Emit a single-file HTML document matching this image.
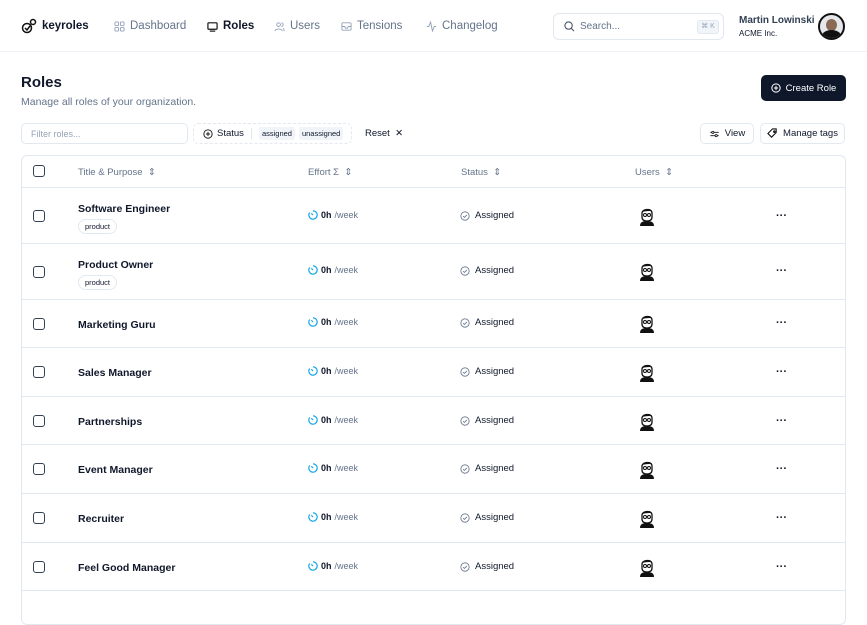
<!DOCTYPE html>
<html><head><meta charset="utf-8"><style>
*{box-sizing:border-box;margin:0;padding:0}
body{width:867px;height:600px;overflow:hidden;background:#fff;font-family:"Liberation Sans",sans-serif;color:#0f172a;font-size:10px;position:relative}
.abs{position:absolute}
.nav{position:absolute;top:0;left:0;width:867px;height:52px;border-bottom:1px solid #eef1f5}
.ni{position:absolute;top:20px;font-size:11.5px;color:#64748b;display:flex;align-items:center;gap:5px}
.ni svg{width:11px;height:11px}
.btn{position:absolute;border:1px solid #e2e8f0;border-radius:5px;display:flex;align-items:center;justify-content:center;gap:5px;font-size:9.5px;color:#0f172a}
.table{position:absolute;left:21px;top:155px;width:825px;height:470px;border:1px solid #e2e8f0;border-radius:6px;overflow:hidden}
.row{position:absolute;left:0;width:825px;border-bottom:1px solid #e2e8f0}
.cb{position:absolute;left:11px;width:12px;height:12px;border:1.3px solid #334155;border-radius:3px}
.th{position:absolute;top:11px;font-size:9.5px;color:#64748b}
.title{position:absolute;left:56px;font-weight:bold;font-size:10.5px}
.tag{position:absolute;left:56px;font-size:7.5px;border:1px solid #e2e8f0;border-radius:8px;padding:2px 6px;color:#0f172a}
.eff{font-size:9px;display:flex;align-items:center;gap:3px}
.eff b{font-weight:bold}.eff span{color:#64748b}
.st{font-size:9.5px;display:flex;align-items:center;gap:5px}
</style></head><body>
<div class="nav">
<div class="abs" style="left:21px;top:18px;display:flex;align-items:center;gap:5px;font-weight:bold;font-size:11.5px">
<svg width="16" height="16" viewBox="0 0 16 16" fill="none" stroke="#111" stroke-width="1.5"><circle cx="6" cy="10" r="4.5"/><circle cx="12" cy="4" r="2.5"/><path d="M4 10l2 2 3-4"/></svg>keyroles</div>
<div class="ni" style="left:114px"><svg viewBox="0 0 12 12" fill="none" stroke="#94a3b8"><rect x="1" y="1" width="4" height="4" rx="1"/><rect x="7" y="1" width="4" height="4" rx="1"/><rect x="1" y="7" width="4" height="4" rx="1"/><rect x="7" y="7" width="4" height="4" rx="1"/></svg>Dashboard</div>
<div class="ni" style="left:207px;color:#0f172a;font-weight:bold"><svg viewBox="0 0 12 12" fill="none" stroke="#111" stroke-width="1.3"><rect x="1" y="2" width="10" height="7" rx="1"/><path d="M3 11h6"/></svg>Roles</div>
<div class="ni" style="left:274px"><svg viewBox="0 0 12 12" fill="none" stroke="#94a3b8"><circle cx="5" cy="4" r="2"/><path d="M1 11c0-3 8-3 8 0M8 2a2 2 0 010 4M10 8c1 1 1 2 1 3"/></svg>Users</div>
<div class="ni" style="left:341px"><svg viewBox="0 0 12 12" fill="none" stroke="#94a3b8"><rect x="1" y="2" width="10" height="8" rx="1"/><path d="M1 6h3l1 2h2l1-2h3"/></svg>Tensions</div>
<div class="ni" style="left:426px"><svg viewBox="0 0 12 12" fill="none" stroke="#94a3b8"><path d="M1 6h2l2-5 2 10 2-5h2"/></svg>Changelog</div>
<div class="abs" style="left:553px;top:13px;width:171px;height:27px;border:1px solid #e2e8f0;border-radius:6px">
<svg class="abs" style="left:10px;top:7px" width="11" height="11" viewBox="0 0 12 12" fill="none" stroke="#475569" stroke-width="1.2"><circle cx="5" cy="5" r="4"/><path d="M8 8l3 3"/></svg>
<span class="abs" style="left:26px;top:7px;font-size:10px;color:#64748b">Search...</span>
<span class="abs" style="left:143px;top:6px;width:22px;height:14px;background:#f1f5f9;border:1px solid #e2e8f0;border-radius:3px;font-size:7px;color:#94a3b8;text-align:center;line-height:12px">⌘ K</span></div>
<div class="abs" style="left:739px;top:15px;font-size:10px;color:#334155;font-weight:bold">Martin Lowinski</div>
<div class="abs" style="left:739px;top:29px;font-size:8px;color:#0f172a">ACME Inc.</div>
<div class="abs" style="left:818px;top:13px;width:27px;height:27px;border-radius:50%;background:#e5e7eb;border:2px solid #111;overflow:hidden"><div class="abs" style="left:6px;top:4px;width:11px;height:12px;border-radius:50%;background:#8a6a55"></div><div class="abs" style="left:2px;top:15px;width:19px;height:12px;border-radius:50% 50% 0 0;background:#111"></div></div>
</div>
<div class="abs" style="left:21px;top:74px;font-size:15px;font-weight:bold">Roles</div>
<div class="abs" style="left:21px;top:96px;font-size:10.5px;color:#64748b">Manage all roles of your organization.</div>
<div class="abs" style="left:761px;top:75px;width:85px;height:26px;background:#0f172a;border-radius:5px;color:#fff;font-size:9.5px;display:flex;align-items:center;justify-content:center;gap:5px"><svg width="10" height="10" viewBox="0 0 12 12" fill="none" stroke="#fff" stroke-width="1.2"><circle cx="6" cy="6" r="5"/><path d="M6 3.5v5M3.5 6h5"/></svg>Create Role</div>
<div class="btn" style="left:21px;top:123px;width:167px;height:21px;justify-content:flex-start;padding-left:9px;color:#94a3b8;font-size:9px">Filter roles...</div>
<div class="btn" style="left:193px;top:123px;width:159px;height:21px;border-style:dashed;justify-content:flex-start;padding-left:9px;gap:4px"><svg width="10" height="10" viewBox="0 0 12 12" fill="none" stroke="#111" stroke-width="1.1"><circle cx="6" cy="6" r="5"/><path d="M6 3.5v5M3.5 6h5"/></svg>Status<span style="width:1px;height:11px;background:#e2e8f0;margin:0 3px"></span><span style="background:#f1f5f9;font-size:7.5px;padding:2px 3px;border-radius:2px">assigned</span><span style="background:#f1f5f9;font-size:7.5px;padding:2px 3px;border-radius:2px">unassigned</span></div>
<div class="abs" style="left:365px;top:128px;font-size:9.5px">Reset &nbsp;✕</div>
<div class="btn" style="left:700px;top:123px;width:54px;height:21px"><svg width="11" height="10" viewBox="0 0 12 12" fill="none" stroke="#111"><path d="M1 4h10M1 8h10"/><circle cx="4" cy="4" r="1.3" fill="#fff"/><circle cx="8" cy="8" r="1.3" fill="#fff"/></svg>View</div>
<div class="btn" style="left:760px;top:123px;width:85px;height:21px"><svg width="11" height="11" viewBox="0 0 12 12" fill="none" stroke="#111" stroke-width="1.2"><path d="M1 6l5-5h4v4l-5 5z"/><circle cx="8" cy="4" r="0.8"/></svg>Manage tags</div>
<div class="table">
<div class="row" style="top:0;height:32px"><div class="cb" style="top:9px"></div>
<div class="th" style="left:56px">Title &amp; Purpose &nbsp;⇕</div><div class="th" style="left:286px">Effort Σ &nbsp;⇕</div><div class="th" style="left:439px">Status &nbsp;⇕</div><div class="th" style="left:613px">Users &nbsp;⇕</div></div>
<div class="row" style="top:32px;height:56px"><div class="cb" style="top:22px"></div><div class="title" style="top:15px">Software Engineer</div><div class="tag" style="top:31px">product</div></div>
<div class="row" style="top:88px;height:56px"><div class="cb" style="top:22px"></div><div class="title" style="top:15px">Product Owner</div><div class="tag" style="top:31px">product</div></div>
<div class="row" style="top:144px;height:48px"><div class="cb" style="top:18px"></div><div class="title" style="top:19px">Marketing Guru</div></div>
<div class="row" style="top:192px;height:49px"><div class="cb" style="top:18px"></div><div class="title" style="top:19px">Sales Manager</div></div>
<div class="row" style="top:241px;height:48px"><div class="cb" style="top:18px"></div><div class="title" style="top:19px">Partnerships</div></div>
<div class="row" style="top:289px;height:49px"><div class="cb" style="top:18px"></div><div class="title" style="top:19px">Event Manager</div></div>
<div class="row" style="top:338px;height:49px"><div class="cb" style="top:18px"></div><div class="title" style="top:19px">Recruiter</div></div>
<div class="row" style="top:387px;height:48px"><div class="cb" style="top:18px"></div><div class="title" style="top:19px">Feel Good Manager</div></div>
</div>
<div id="cells"></div>
<script>
var ys=[216,271,323,372,421,469,518,567],h='';
ys.forEach(function(y){
h+='<div class="eff" style="left:308px;top:'+(y-6)+'px;position:absolute"><svg width="10" height="10" viewBox="0 0 12 12" fill="none" stroke="#0ea5e9" stroke-width="1.4"><path d="M6 1a5 5 0 1 1-4 2"/><path d="M4 4l2 2"/></svg><b>0h</b><span>/week</span></div>';
h+='<div class="st" style="left:460px;top:'+(y-6)+'px;position:absolute"><svg width="10" height="10" viewBox="0 0 12 12" fill="none" stroke="#64748b"><circle cx="6" cy="6" r="5"/><path d="M3.8 6.2l1.5 1.5 3-3"/></svg>Assigned</div>';
h+='<svg style="position:absolute;left:639px;top:'+(y-9)+'px" width="16" height="19" viewBox="0 0 16 19"><path d="M3 6c0-4 10-5 10 0v4c0 3-2 4-5 4s-5-1-5-4z" fill="#fff" stroke="#111" stroke-width="1.3"/><path d="M3 5c1-4 9-4 10-1-3 0-6 0-10 1z" fill="#111"/><circle cx="6" cy="8" r="1.5" fill="none" stroke="#111"/><circle cx="10" cy="8" r="1.5" fill="none" stroke="#111"/><path d="M1 19c0-4 3-5 7-5s7 1 7 5z" fill="#111"/></svg>';
h+='<div style="position:absolute;left:776px;top:'+(y-6)+'px;font-size:11px;font-weight:bold">···</div>';
});
document.getElementById('cells').innerHTML=h;
</script>
</body></html>
